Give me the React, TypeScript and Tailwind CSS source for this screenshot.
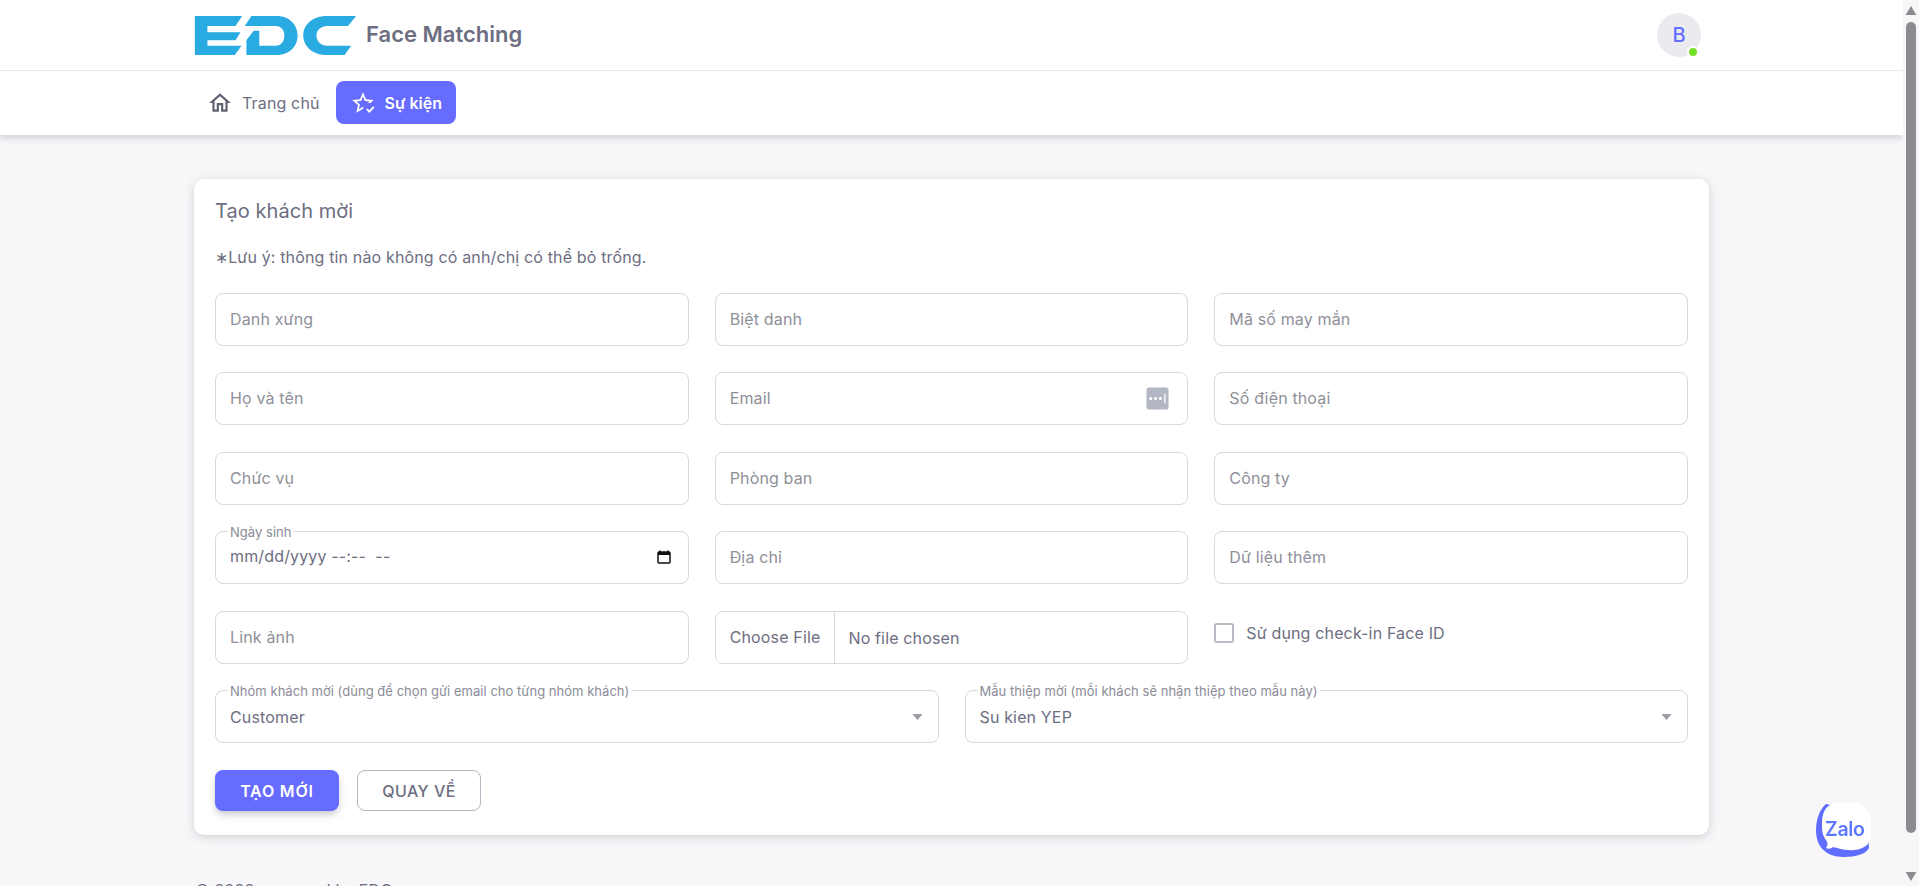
const FONT = "font-['Inter','Noto_Sans',sans-serif]";

function TextField({ placeholder, autofill }: { placeholder: string; autofill?: boolean }) {
  return (
    <div className="relative h-[53px] rounded-[8px] border border-[#d8d8dd] bg-white">
      <input
        type="text"
        placeholder={placeholder}
        className="h-full w-full rounded-[8px] bg-transparent px-[14px] pb-[1px] text-[16px] tracking-[0.15px] text-[#6d6e81] outline-none placeholder:text-[#8f9099]"
      />
      {autofill && (
        <svg viewBox="0 0 24 24" className="absolute right-[18px] top-[14px] h-[23px] w-[23px]">
          <rect x="0.5" y="0.5" width="23" height="23" rx="3" fill="#b3b6c3" />
          <circle cx="5" cy="12" r="1.6" fill="#fff" />
          <circle cx="10" cy="12" r="1.6" fill="#fff" />
          <circle cx="15" cy="12" r="1.6" fill="#fff" />
          <rect x="19" y="7" width="1.4" height="10" fill="#fff" />
        </svg>
      )}
    </div>
  );
}

function Legend({ text }: { text: string }) {
  return (
    <span className="absolute -top-[8px] left-[12px] bg-white px-[2px] text-[13px] leading-[16px] tracking-[0.03px] text-[#8b8c98]">
      {text}
    </span>
  );
}

function SelectField({ label, value }: { label: string; value: string }) {
  return (
    <div className="relative flex h-[53px] items-center rounded-[8px] border border-[#d8d8dd] bg-white pl-[14px] pt-[1px]">
      <Legend text={label} />
      <span className="text-[16px] tracking-[0.15px] text-[#6d6e81]">{value}</span>
      <svg viewBox="0 0 10 6" className="absolute right-[15px] top-[23px] h-[6px] w-[11px]">
        <path d="M0 0h10L5 6z" fill="#9a9ba5" />
      </svg>
    </div>
  );
}

function Logo() {
  return (
    <svg viewBox="27 17 488 118" className="h-[39px] w-[163px] shrink-0" fill="#29abe2">
      <path d="M27 17H170L150 47H65V66H165L150 90H65V107H168L148 135H27Z" />
      <path d="M198 17H275C312 17 338 43 338 76C338 110 312 135 275 135H183V90L205 62H222V107H272C288 107 298 93 298 76C298 60 288 47 272 47H178Z" />
      <path d="M355 76C355 42 385 17 425 17H515L490 47H428C408 47 395 60 395 76C395 94 408 107 428 107H500L480 135H425C385 135 355 110 355 76Z" />
    </svg>
  );
}

function Zalo() {
  return (
    <div className="fixed right-[48px] top-[803px] h-[54px] w-[55px]">
      <svg viewBox="0 0 55 54" className="h-full w-full">
        <path d="M10 1C4 6 0 16 0 27C0 42 8 54 28 54C40 54 50 51 53 45L50 10Z" fill="#5f6dff" />
        <path
          d="M22 0H36C48 0 55 7 55 19V30C55 40 50 46 38 47C30 48 22 45 17 44C15 46 12 46 10 45C12 42 12 40 10 37C6 32 6 26 6 20C6 8 11 0 22 0Z"
          fill="#fff"
        />
      </svg>
      <span className="absolute left-[9px] top-[15px] text-[19.5px] font-semibold leading-[22px] tracking-[-0.3px] text-[#5b78ff]">
        Zalo
      </span>
    </div>
  );
}

function Scrollbar() {
  return (
    <aside className="flex h-full w-[16px] shrink-0 flex-col items-center bg-[#f7f7f9]">
      <svg viewBox="0 0 12 10" className="mt-[6px] h-[9px] w-[12px]">
        <path d="M6 0L12 10H0z" fill="#8b8b90" />
      </svg>
      <div className="mt-[7px] h-[811px] w-[10px] rounded-full bg-[#8b8b90]" />
      <svg viewBox="0 0 12 10" className="mt-[39px] h-[9px] w-[12px]">
        <path d="M0 0H12L6 10z" fill="#8b8b90" />
      </svg>
    </aside>
  );
}

export default function App() {
  return (
    <div className={`flex h-screen overflow-hidden bg-[#f7f7f9] ${FONT}`}>
      <div className="min-w-0 flex-1 overflow-hidden">
        <header className="bg-white shadow-[0_3px_6px_rgba(76,78,100,0.22)]">
          <div className="border-b border-[#e9e9ec]">
            <div className="ml-[194px] flex h-[70px] w-[1515px] items-center">
              <Logo />
              <span className="ml-[9px] pb-[2px] text-[22px] font-semibold text-[#6d6e81]">Face Matching</span>
              <div className="relative ml-auto mr-[8px] flex h-[44px] w-[44px] items-center justify-center rounded-full bg-[#eaebef] text-[20px] font-medium text-[#666cff]">
                B
                <span className="absolute -bottom-[1px] right-[2px] h-[12px] w-[12px] rounded-full border-2 border-white bg-[#72e128]" />
              </div>
            </div>
          </div>
          <nav className="ml-[194px] flex h-[64px] w-[1515px] items-center gap-[3px] pb-[1px]">
            <a className="flex h-[43px] items-center gap-[9px] px-[13px] text-[16px] tracking-[0.15px] text-[#6d6e81]">
              <svg viewBox="0 0 24 24" className="h-[26px] w-[26px]" fill="#5f6072">
                <path d="M12 5.69l5 4.5V18h-2v-6H9v6H7v-7.81l5-4.5M12 3L2 12h3v8h6v-6h2v6h6v-8h3L12 3z" />
              </svg>
              Trang chủ
            </a>
            <a className="flex h-[43px] w-[120px] items-center gap-[9px] rounded-[8px] bg-[#666cff] pl-[14px] text-[16px] font-semibold text-white">
              <svg viewBox="0 0 24 24" className="h-[26px] w-[26px]" fill="#fff">
                <path d="M5.8 21L7.4 14L2 9.2L9.2 8.6L12 2L14.8 8.6L22 9.2L18.8 12H18C17.3 12 16.6 12.1 15.9 12.4L18.1 10.5L13.7 10.1L12 6.1L10.3 10.1L5.9 10.5L9.2 13.4L8.2 17.7L12 15.4L12.5 15.7C12.3 16.2 12.1 16.8 12.1 17.3L5.8 21M17.8 21.2L15 18.2L16.2 17L17.8 18.6L21.4 15L22.6 16.4L17.8 21.2Z" />
              </svg>
              Sự kiện
            </a>
          </nav>
        </header>

        <main className="ml-[194px] mt-[44px] w-[1515px]">
          <section className="rounded-[10px] bg-white px-[21px] pb-[24px] pt-[18px] shadow-[0_2px_10px_rgba(76,78,100,0.22)]">
            <h2 className="text-[20px] font-normal leading-[28px] tracking-[0.05px] text-[#6d6e81]">Tạo khách mời</h2>
            <p className="mt-[20px] text-[16px] leading-[24px] tracking-[0.15px] text-[#6d6e81]">∗Lưu ý: thông tin nào không có anh/chị có thể bỏ trống.</p>

            <div className="mt-[24px] grid grid-cols-3 gap-x-[26px] gap-y-[26.4px]">
              <TextField placeholder="Danh xưng" />
              <TextField placeholder="Biệt danh" />
              <TextField placeholder="Mã số may mắn" />
              <TextField placeholder="Họ và tên" />
              <TextField placeholder="Email" autofill />
              <TextField placeholder="Số điện thoại" />
              <TextField placeholder="Chức vụ" />
              <TextField placeholder="Phòng ban" />
              <TextField placeholder="Công ty" />
              <div className="relative h-[53px] rounded-[8px] border border-[#d8d8dd] bg-white">
                <Legend text="Ngày sinh" />
                <input
                  type="text"
                  readOnly
                  value="mm/dd/yyyy --:--  --"
                  className="h-full w-full whitespace-pre rounded-[8px] bg-transparent px-[14px] pb-[3px] text-[16px] tracking-[0.15px] text-[#6d6e81] outline-none"
                />
                <svg viewBox="0 0 14 14" className="absolute right-[17px] top-[18px] h-[14px] w-[14px]" fill="none">
                  <path d="M3 0.5V2M11 0.5V2" stroke="#111" strokeWidth="1.6" />
                  <rect x="1" y="2" width="12" height="11" rx="1" stroke="#111" strokeWidth="1.5" />
                  <rect x="1" y="2" width="12" height="3" fill="#111" />
                </svg>
              </div>
              <TextField placeholder="Địa chỉ" />
              <TextField placeholder="Dữ liệu thêm" />
              <TextField placeholder="Link ảnh" />
              <input
                type="file"
                className="h-[53px] w-full rounded-[8px] border border-[#d8d8dd] bg-white text-[16px] tracking-[0.15px] text-[#6d6e81] file:mr-[13px] file:h-full file:border-0 file:border-r file:border-solid file:border-[#d8d8dd] file:bg-white file:px-[14px] file:text-[16px] file:tracking-[0.15px] file:text-[#6d6e81]"
              />
              <label className="flex h-[53px] items-center gap-[12px] pb-[9px] text-[16px] tracking-[0.15px] text-[#6d6e81]">
                <span className="h-[20px] w-[20px] rounded-[3px] border-2 border-[#b8b9c4]" />
                Sử dụng check-in Face ID
              </label>
            </div>

            <div className="mt-[26.4px] grid grid-cols-2 gap-x-[26px]">
              <SelectField label="Nhóm khách mời (dùng để chọn gửi email cho từng nhóm khách)" value="Customer" />
              <SelectField label="Mẫu thiệp mời (mỗi khách sẽ nhận thiệp theo mẫu này)" value="Su kien YEP" />
            </div>

            <div className="mt-[27px] flex gap-[18px]">
              <button className="h-[41px] w-[124px] rounded-[8px] bg-[#666cff] pt-[1px] text-[16px] font-semibold tracking-[0.8px] text-white shadow-[0_4px_8px_-2px_rgba(76,78,100,0.42)]">
                TẠO MỚI
              </button>
              <button className="h-[41px] w-[124px] rounded-[8px] border border-[#b5b5c3] bg-white pt-[1px] text-[16px] font-medium tracking-[0.46px] text-[#6d6e81]">
                QUAY VỀ
              </button>
            </div>
          </section>
          <footer className="mt-[43px] pl-[1px] text-[16px] leading-[24px] tracking-[0.15px] text-[#6d6e81]">© 2023, powered by EDC</footer>
        </main>
      </div>
      <Scrollbar />
      <Zalo />
    </div>
  );
}
